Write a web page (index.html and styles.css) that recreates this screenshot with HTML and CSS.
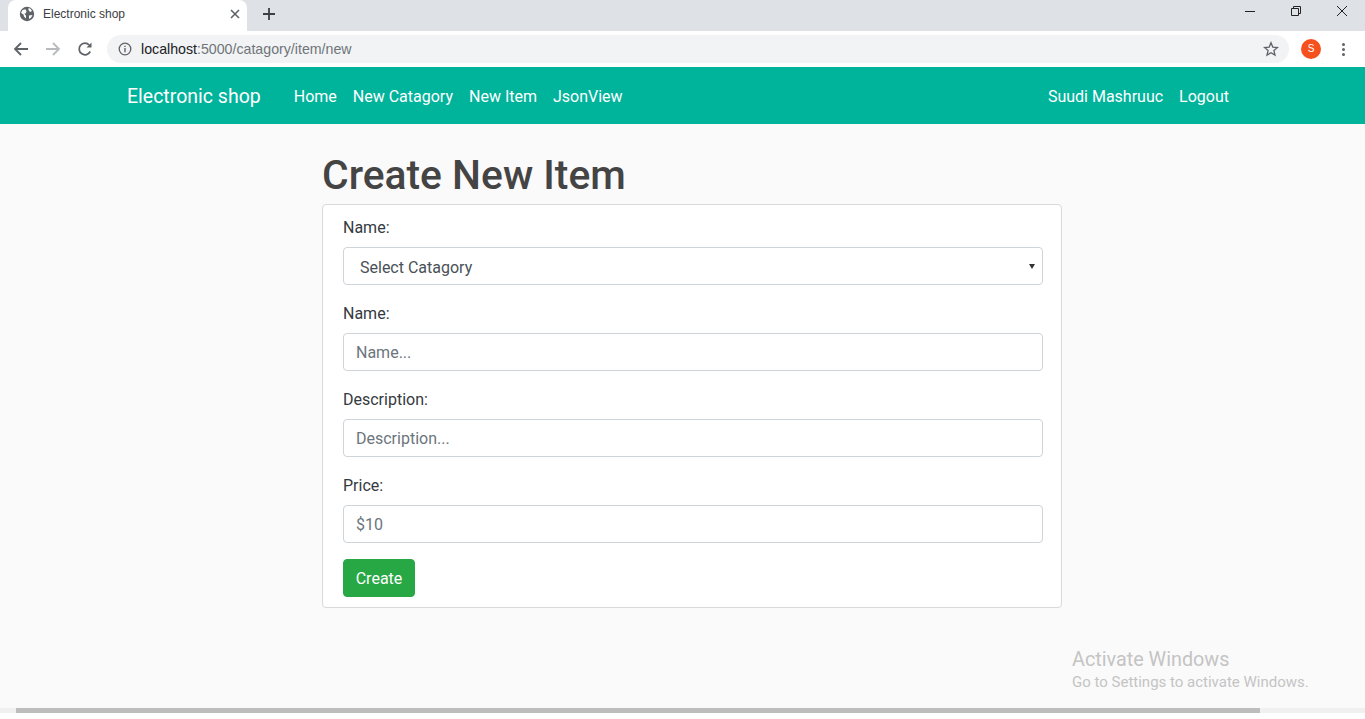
FILE: index.html
```html
<!DOCTYPE html>
<html lang="en">
<head>
    <meta charset="UTF-8">
    <meta name="viewport" content="width=device-width, initial-scale=1.0">
    <title>Electronic shop</title>
    <link rel="stylesheet" href="styles.css">
</head>
<body>
    <!-- browser chrome -->
    <div class="tabstrip">
        <div class="tab">
            <svg class="favicon" width="16" height="16" viewBox="0 0 16 16"><circle cx="8" cy="8" r="7.200" fill="#5f6368"/><path d="M3.500 4 6.500 3.200l1 1.800L7 7 5.500 7.800l1.500 2v2.700L5 10.500 4.500 8.500 2 7zM9.500 2l2 .8 1.500 2.200-2 1-1.500-2zM10 9.500l3.500-.5-1.300 2.500L10 13z" fill="#fff"/></svg>
            <span class="tab-title">Electronic shop</span>
            <svg class="tab-close" width="10" height="10" viewBox="0 0 10 10"><path d="M1 1l8 8M9 1l-8 8" stroke="#5f6368" stroke-width="1.600"/></svg>
        </div>
        <svg class="new-tab" width="12" height="12" viewBox="0 0 12 12"><path d="M6 0v12M0 6h12" stroke="#3c4043" stroke-width="1.800"/></svg>
        <div class="win-btns">
            <svg width="10" height="10" viewBox="0 0 10 10"><path d="M0 5.500h10" stroke="#222"/></svg>
            <svg width="10" height="10" viewBox="0 0 10 10"><path d="M.5 2.500h7v7h-7zM2.500 2.500v-2h7v7h-2" fill="none" stroke="#222"/></svg>
            <svg width="10" height="10" viewBox="0 0 10 10"><path d="M0 0l10 10M10 0L0 10" stroke="#222"/></svg>
        </div>
    </div>
    <div class="toolbar">
        <svg class="tool" width="16" height="16" viewBox="0 0 16 16"><path d="M15 8H2M8 2 2 8l6 6" fill="none" stroke="#5f6368" stroke-width="1.800"/></svg>
        <svg class="tool" width="16" height="16" viewBox="0 0 16 16"><path d="M1 8h13M8 2l6 6-6 6" fill="none" stroke="#b8babd" stroke-width="1.800"/></svg>
        <svg class="tool" width="16" height="16" viewBox="0 0 16 16"><path d="M13.200 10.500A5.800 5.800 0 1 1 12.200 4" fill="none" stroke="#5f6368" stroke-width="1.800"/><path d="M14.500 1.500v5h-5z" fill="#5f6368"/></svg>
        <div class="omnibox">
            <svg width="14" height="14" viewBox="0 0 14 14"><circle cx="7" cy="7" r="5.800" fill="none" stroke="#5f6368" stroke-width="1.300"/><path d="M7 6v4.200M7 3.800v1.300" stroke="#5f6368" stroke-width="1.400"/></svg>
            <span class="url"><span class="url-host">localhost</span>:5000/catagory/item/new</span>
            <svg class="star" width="16" height="16" viewBox="0 0 16 16"><path d="m8 1.800 1.800 4.300 4.700.4-3.600 3 1.100 4.600-4-2.400-4 2.400 1.100-4.600-3.600-3 4.700-.4z" fill="none" stroke="#5f6368" stroke-width="1.300"/></svg>
        </div>
        <div class="avatar">S</div>
        <div class="dots"><i></i><i></i><i></i></div>
    </div>

    <!-- page -->
    <div class="viewport">
        <nav class="navbar">
            <a class="brand" href="#">Electronic shop</a>
            <ul class="nav-list">
                <li><a href="#">Home</a></li>
                <li><a href="#">New Catagory</a></li>
                <li><a href="#">New Item</a></li>
                <li><a href="#">JsonView</a></li>
            </ul>
            <ul class="nav-list nav-right">
                <li><a href="#">Suudi Mashruuc</a></li>
                <li><a href="#">Logout</a></li>
            </ul>
        </nav>

        <main class="container">
            <h1>Create New Item</h1>
            <form class="card">
                <div class="form-group">
                    <label>Name:</label>
                    <div class="select-box">Select Catagory</div>
                </div>
                <div class="form-group">
                    <label>Name:</label>
                    <input type="text" placeholder="Name...">
                </div>
                <div class="form-group">
                    <label>Description:</label>
                    <input type="text" placeholder="Description...">
                </div>
                <div class="form-group">
                    <label>Price:</label>
                    <input type="text" placeholder="$10">
                </div>
                <button type="button" class="btn">Create</button>
            </form>
        </main>

        <div class="activate">
            <div class="activate-title">Activate Windows</div>
            <div>Go to Settings to activate Windows.</div>
        </div>
    </div>

    <div class="scrollbar"><div class="thumb"></div></div>
</body>
</html>
```

FILE: styles.css
```css
*{
    margin: 0;
    padding: 0;
    box-sizing: border-box;
}
html, body{
    height: 100%;
    overflow: hidden;
}
body{
    display: flex;
    flex-direction: column;
    background-color: #fff;
    font-family: Roboto, "Open Sans", sans-serif;
    color: #343a40;
}

/* browser chrome */
.tabstrip{
    height: 31px;
    background-color: #dee1e6;
    display: flex;
    align-items: flex-start;
    padding-left: 8px;
    flex: none;
}
.tab{
    width: 239px;
    height: 31px;
    padding: 0 7px 4px 11px;
    background-color: #fff;
    border-radius: 8px 8px 0 0;
    display: flex;
    align-items: center;
}
.tab-title{
    margin-left: 8px;
    font: 12px "Liberation Sans", sans-serif;
    color: #3c4043;
    flex: 1;
}
.new-tab{
    margin: 8px 0 0 16px;
}
.win-btns{
    margin-left: auto;
    display: flex;
    gap: 36px;
    padding: 6px 18px 0 0;
}
.toolbar{
    height: 36px;
    background-color: #fff;
    display: flex;
    align-items: center;
    padding: 0 0 0 13px;
    flex: none;
}
.tool{
    margin-right: 16px;
}
.omnibox{
    width: 1182px;
    height: 28px;
    margin-left: -2px;
    border-radius: 14px;
    background-color: #f1f3f4;
    display: flex;
    align-items: center;
    padding: 0 10px 0 11px;
}
.url{
    margin-left: 9px;
    font: 14.200px "Liberation Sans", sans-serif;
    color: #70757a;
    flex: 1;
}
.url-host{
    color: #202124;
}
.avatar{
    width: 20px;
    height: 20px;
    margin-left: 12px;
    border-radius: 50%;
    background-color: #f4511e;
    color: #fff;
    font: 10px/20px "Liberation Sans", sans-serif;
    text-align: center;
}
.dots{
    margin-left: 21px;
    display: flex;
    flex-direction: column;
    gap: 2px;
}
.dots i{
    width: 3px;
    height: 3px;
    border-radius: 50%;
    background-color: #5f6368;
}

/* page */
.viewport{
    flex: 1;
    position: relative;
    background-color: #fafafa;
    min-height: 0;
}
.navbar{
    height: 57px;
    background-color: #00b39b;
    display: flex;
    align-items: center;
    padding: 2px 136px 0 127px;
    font-size: 16px;
}
.navbar a{
    color: #fff;
    text-decoration: none;
}
.brand{
    font-size: 19.500px;
    margin-right: 33px;
}
.nav-list{
    list-style: none;
    display: flex;
    gap: 16px;
}
.nav-right{
    margin-left: auto;
}
.container{
    width: 740px;
    margin-left: 322px;
    padding-top: 27px;
}
h1{
    font-size: 40.800px;
    font-weight: 500;
    line-height: 48px;
    color: #444;
    margin-bottom: 5px;
}
.card{
    height: 404px;
    background-color: #fff;
    border: 1px solid #d9d9d9;
    border-radius: 4px;
    padding: 10px 18px 0 20px;
}
.form-group{
    margin-bottom: 16px;
}
label{
    display: block;
    padding-top: 1px;
    font-size: 16px;
    line-height: 24px;
    margin-bottom: 7px;
}
.select-box, input{
    display: block;
    width: 100%;
    height: 38px;
    background-color: #fff;
    border: 1px solid #ced4da;
    border-radius: 4px;
    font-family: inherit;
    font-size: 16px;
    color: #495057;
}
input{
    padding: 0 12px;
}
input::placeholder{
    color: #6c757d;
    opacity: 1;
}
.select-box{
    position: relative;
    padding-left: 16px;
    line-height: 40px;
}
/* select arrow */
.select-box::after{
    content: "";
    position: absolute;
    right: 7px;
    top: 16px;
    border-left: 3px solid transparent;
    border-right: 3px solid transparent;
    border-top: 5px solid #333;
}
.btn{
    display: block;
    width: 72px;
    height: 38px;
    background-color: #28a745;
    border: 1px solid #28a745;
    border-radius: 4px;
    color: #fff;
    font-family: inherit;
    font-size: 16px;
}
.activate{
    position: absolute;
    left: 1072px;
    top: 580px;
    font-size: 15px;
    line-height: 21px;
    color: #c4c4c4;
}
.activate-title{
    font-size: 19.800px;
    line-height: 25px;
}
.scrollbar{
    height: 5px;
    margin-bottom: 6px;
    background-color: #f0f0f0;
    padding-left: 16px;
    flex: none;
}
.thumb{
    width: 1244px;
    height: 100%;
    background-color: #bdbdbd;
}
```
